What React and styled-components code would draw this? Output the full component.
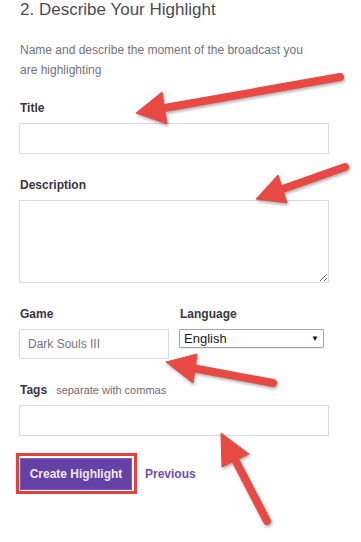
import React from 'react';
import styled, { createGlobalStyle } from 'styled-components';

const Global = createGlobalStyle`
  html, body { margin: 0; padding: 0; background: #fff; }
  body { font-family: "Liberation Sans", Arial, sans-serif; }
  * { box-sizing: border-box; }
`;

const Page = styled.div`
  position: relative;
  width: 361px;
  height: 542px;
  overflow: hidden;
  padding: 0 0 0 19px;
  background: #fff;
`;

const Heading = styled.h2`
  margin: 0 0 0 1px;
  font-size: 17px;
  line-height: 19px;
  font-weight: normal;
  color: #4d4b52;
`;

const Intro = styled.p`
  margin: 21px 0 0 1px;
  width: 298px;
  font-size: 12px;
  line-height: 20px;
  color: #75707f;
`;

const Form = styled.form`
  display: flex;
  flex-direction: column;
  gap: 23px;
  margin-top: 20px;
  width: 310px;
`;

const Field = styled.div`
  display: flex;
  flex-direction: column;
`;

const Label = styled.label`
  display: flex;
  align-items: baseline;
  gap: 9px;
  margin: 0 0 7px 1px;
  font-size: 12px;
  line-height: 16px;
  font-weight: bold;
  color: #3a3542;
`;

const Hint = styled.span`
  font-size: 11px;
  font-weight: normal;
  color: #6f6a7a;
`;

const TextInput = styled.input`
  display: block;
  width: ${p => p.$w || '310px'};
  height: ${p => p.$h || '31px'};
  margin: 0;
  padding: 0 8px;
  border: 1px solid #dcdae1;
  border-radius: 0;
  background: #fff;
  font-family: "Liberation Sans", Arial, sans-serif;
  font-size: 12px;
  color: #77727f;
  outline: none;
`;

const TextArea = styled.textarea`
  display: block;
  width: 310px;
  height: 83px;
  margin: 0;
  padding: 6px 8px;
  border: 1px solid #dcdae1;
  border-radius: 0;
  resize: vertical;
  font-family: "Liberation Sans", Arial, sans-serif;
  font-size: 12px;
  outline: none;
`;

const Row = styled.div`
  display: grid;
  grid-template-columns: 150px 145px;
  column-gap: 10px;
  align-items: start;
`;

const SelectBox = styled.div`
  display: flex;
  align-items: center;
  width: 145px;
  height: 19px;
  border: 1px solid #a4a4a6;
  border-radius: 1px;
  background: #fff;
  box-shadow: 0 1px 1px rgba(0, 0, 0, 0.08);
`;

const Select = styled.select`
  flex: 1;
  height: 100%;
  appearance: none;
  -webkit-appearance: none;
  border: none;
  background: transparent;
  padding: 0 0 0 4px;
  margin: 0;
  font-family: "Liberation Sans", Arial, sans-serif;
  font-size: 13px;
  color: #1c1a20;
  outline: none;
`;

const Caret = styled.span`
  padding-right: 4px;
  font-size: 8px;
  line-height: 1;
  color: #111;
`;

const Actions = styled.div`
  display: flex;
  align-items: center;
  gap: 8px;
  margin: 17px 0 0 -3px;
`;

const Callout = styled.div`
  display: inline-flex;
  border: 3px solid #e5413c;
  padding: 2px 2px 1px 1px;
`;

const PrimaryButton = styled.button`
  width: 112px;
  height: 32px;
  margin: 0;
  padding: 0;
  border: 1px solid #7a5cbc;
  background: #6441a5;
  color: #eeeaf6;
  font-family: "Liberation Sans", Arial, sans-serif;
  font-size: 12px;
  font-weight: bold;
  cursor: pointer;
`;

const LinkButton = styled.a`
  font-size: 12px;
  font-weight: bold;
  color: #6e4fb0;
  text-decoration: none;
  cursor: pointer;
`;

const Overlay = styled.svg`
  position: absolute;
  top: 0;
  left: 0;
  width: 361px;
  height: 542px;
  pointer-events: none;
  filter: drop-shadow(1px 2px 1.5px rgba(0, 0, 0, 0.3));
`;

const RED = '#e84a43';

function Arrow({ tail, tip, a, b }) {
  const mid = [(a[0] + b[0]) / 2, (a[1] + b[1]) / 2];
  return (
    <g>
      <line x1={tail[0]} y1={tail[1]} x2={mid[0]} y2={mid[1]} stroke={RED} strokeWidth="8" strokeLinecap="round" />
      <polygon points={`${tip[0]},${tip[1]} ${a[0]},${a[1]} ${b[0]},${b[1]}`} fill={RED} stroke={RED} strokeWidth="1" strokeLinejoin="round" />
    </g>
  );
}

export default function App() {
  return (
    <>
      <Global />
      <Page>
        <Heading>2. Describe Your Highlight</Heading>
        <Intro>Name and describe the moment of the broadcast you are highlighting</Intro>
        <Form onSubmit={e => e.preventDefault()}>
          <Field>
            <Label>Title</Label>
            <TextInput type="text" />
          </Field>
          <Field>
            <Label>Description</Label>
            <TextArea />
          </Field>
          <Row>
            <Field>
              <Label>Game</Label>
              <TextInput type="text" $w="150px" $h="30px" defaultValue="Dark Souls III" />
            </Field>
            <Field>
              <Label>Language</Label>
              <SelectBox>
                <Select defaultValue="en">
                  <option value="en">English</option>
                </Select>
                <Caret>▼</Caret>
              </SelectBox>
            </Field>
          </Row>
          <Field>
            <Label>Tags <Hint>separate with commas</Hint></Label>
            <TextInput type="text" $h="31px" />
          </Field>
        </Form>
        <Actions>
          <Callout>
            <PrimaryButton type="button">Create Highlight</PrimaryButton>
          </Callout>
          <LinkButton>Previous</LinkButton>
        </Actions>
        <Overlay viewBox="0 0 361 542">
          <Arrow tail={[340, 77]} tip={[136, 113]} a={[162, 92]} b={[167, 124]} />
          <Arrow tail={[345, 167]} tip={[256, 199]} a={[278, 175]} b={[287, 203]} />
          <Arrow tail={[273, 383]} tip={[166, 362]} a={[197, 354]} b={[193, 383]} />
          <Arrow tail={[267, 521]} tip={[221, 433]} a={[222, 467]} b={[249, 454]} />
        </Overlay>
      </Page>
    </>
  );
}
